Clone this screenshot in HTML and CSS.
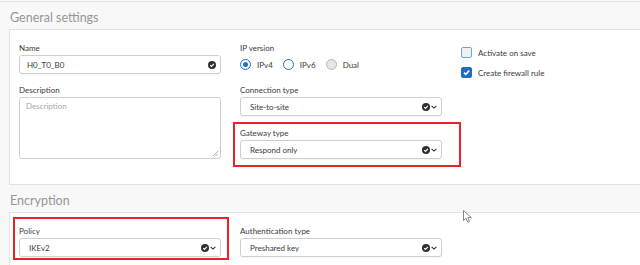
FILE: index.html
```html
<!DOCTYPE html>
<html>
<head>
<meta charset="utf-8">
<link rel="stylesheet" href="styles.css">
</head>
<body>
<div class="page">
  <h2 class="section-title">General settings</h2>
  <div class="panel">
    <div class="col">
      <div class="field">
        <div class="label">Name</div>
        <div class="control">
          <span class="value">H0_T0_B0</span>
          <svg class="ok" width="8" height="8" viewBox="0 0 8 8"><circle cx="4" cy="4" r="4" fill="#2f2f2f"/><path d="M2.2 4.1 L3.5 5.3 L5.9 2.8" fill="none" stroke="#fff" stroke-width="1.2"/></svg>
        </div>
      </div>
      <div class="field">
        <div class="label">Description</div>
        <div class="textarea">
          <span class="placeholder">Description</span>
          <svg class="grip" width="6" height="6" viewBox="0 0 6 6"><path d="M6 1 L1 6 M6 3.5 L3.5 6" stroke="#999" stroke-width="0.8"/></svg>
        </div>
      </div>
    </div>
    <div class="col">
      <div class="field">
        <div class="label">IP version</div>
        <div class="radios">
          <span class="radio-item"><span class="radio checked"></span>IPv4</span>
          <span class="radio-item"><span class="radio"></span>IPv6</span>
          <span class="radio-item"><span class="radio disabled"></span>Dual</span>
        </div>
      </div>
      <div class="field">
        <div class="label">Connection type</div>
        <div class="control">
          <span class="value sel">Site-to-site</span>
          <svg class="ok" width="8" height="8" viewBox="0 0 8 8"><circle cx="4" cy="4" r="4" fill="#2f2f2f"/><path d="M2.2 4.1 L3.5 5.3 L5.9 2.8" fill="none" stroke="#fff" stroke-width="1.2"/></svg>
          <svg class="chev" width="6" height="4" viewBox="0 0 6 4"><path d="M0.6 0.8 L3 3.1 L5.4 0.8" fill="none" stroke="#333" stroke-width="1.1"/></svg>
        </div>
      </div>
      <div class="field gateway highlight">
        <div class="label">Gateway type</div>
        <div class="control">
          <span class="value sel">Respond only</span>
          <svg class="ok" width="8" height="8" viewBox="0 0 8 8"><circle cx="4" cy="4" r="4" fill="#2f2f2f"/><path d="M2.2 4.1 L3.5 5.3 L5.9 2.8" fill="none" stroke="#fff" stroke-width="1.2"/></svg>
          <svg class="chev" width="6" height="4" viewBox="0 0 6 4"><path d="M0.6 0.8 L3 3.1 L5.4 0.8" fill="none" stroke="#333" stroke-width="1.1"/></svg>
        </div>
      </div>
    </div>
    <div class="col checks">
      <div class="check-item"><span class="checkbox"></span>Activate on save</div>
      <div class="check-item"><span class="checkbox checked"><svg width="9" height="9" viewBox="0 0 9 9"><path d="M2 4.6 L3.8 6.4 L7.2 2.6" fill="none" stroke="#fff" stroke-width="1.6"/></svg></span>Create firewall rule</div>
    </div>
  </div>

  <h2 class="section-title">Encryption</h2>
  <div class="panel panel-last">
    <div class="col">
      <div class="field policy highlight">
        <div class="label">Policy</div>
        <div class="control">
          <span class="value sel">IKEv2</span>
          <svg class="ok" width="8" height="8" viewBox="0 0 8 8"><circle cx="4" cy="4" r="4" fill="#2f2f2f"/><path d="M2.2 4.1 L3.5 5.3 L5.9 2.8" fill="none" stroke="#fff" stroke-width="1.2"/></svg>
          <svg class="chev" width="6" height="4" viewBox="0 0 6 4"><path d="M0.6 0.8 L3 3.1 L5.4 0.8" fill="none" stroke="#333" stroke-width="1.1"/></svg>
        </div>
      </div>
    </div>
    <div class="col">
      <div class="field">
        <div class="label">Authentication type</div>
        <div class="control">
          <span class="value sel">Preshared key</span>
          <svg class="ok" width="8" height="8" viewBox="0 0 8 8"><circle cx="4" cy="4" r="4" fill="#2f2f2f"/><path d="M2.2 4.1 L3.5 5.3 L5.9 2.8" fill="none" stroke="#fff" stroke-width="1.2"/></svg>
          <svg class="chev" width="6" height="4" viewBox="0 0 6 4"><path d="M0.6 0.8 L3 3.1 L5.4 0.8" fill="none" stroke="#333" stroke-width="1.1"/></svg>
        </div>
      </div>
    </div>
  </div>
</div>
<svg class="cursor" width="10" height="14" viewBox="0 0 10 14"><path d="M0.5 0.5 L0.5 10.5 L3 8.2 L4.8 12.3 L6.6 11.5 L4.9 7.6 L8.3 7.6 Z" fill="#fff" stroke="#777" stroke-width="0.9"/></svg>
</body>
</html>
```

FILE: styles.css
```css
html, body {
  margin: 0;
  padding: 0;
}
body {
  width: 640px;
  height: 265px;
  overflow: hidden;
  background: #f8f8f8;
  font-family: Lato, "Open Sans", sans-serif;
  color: #3a3a3a;
  position: relative;
}
.page {
  margin-top: 1px;
  border-top: 1px solid #e4e4e4;
}
.section-title {
  margin: 0;
  height: 27px;
  box-sizing: border-box;
  padding: 2px 0 0 10px;
  line-height: 27px;
  font-size: 12.5px;
  font-weight: 400;
  color: #969696;
}
.panel {
  margin-left: 9px;
  background: #fff;
  border: 1px solid #e2e2e2;
  border-right: none;
  padding: 12px 9px 25px;
  display: flex;
  gap: 19px;
}
.panel-last {
  padding-bottom: 12px;
}
.col {
  width: 202px;
  display: flex;
  flex-direction: column;
  gap: 10px;
}
.col.checks {
  width: auto;
  padding-top: 5px;
  gap: 9px;
}
.field {
  display: flex;
  flex-direction: column;
  position: relative;
}
.gateway {
  margin-top: 1px;
}
.label {
  font-size: 8px;
  line-height: 12px;
  margin-bottom: 1px;
  color: #3a3a3a;
}
.control {
  height: 19px;
  box-sizing: border-box;
  border: 1px solid #cfcfcf;
  border-radius: 3px;
  background: #fff;
  display: flex;
  align-items: center;
  padding: 0 4px 0 7px;
  box-shadow: 0 1px 1px rgba(0,0,0,0.04);
}
.value {
  flex: 1;
  font-size: 8px;
  color: #3a3a3a;
}
.value.sel {
  padding-left: 2px;
}
.ok {
  display: block;
}
.chev {
  display: block;
  margin-left: 1px;
}
.textarea {
  height: 62px;
  box-sizing: border-box;
  border: 1px solid #cfcfcf;
  border-radius: 3px;
  background: #fff;
  padding: 3px 6px;
  display: flex;
  flex-direction: column;
  justify-content: space-between;
  align-items: flex-start;
}
.placeholder {
  font-size: 8px;
  color: #a8a8a8;
}
.grip {
  align-self: flex-end;
  margin-right: -4px;
  margin-bottom: -1px;
}
.radios {
  height: 19px;
  display: flex;
  align-items: center;
  gap: 10px;
}
.radio-item {
  display: flex;
  align-items: center;
  gap: 6px;
  font-size: 8px;
  color: #3a3a3a;
}
.radio {
  width: 11px;
  height: 11px;
  box-sizing: border-box;
  border-radius: 50%;
  border: 1.5px solid #1f74c6;
  background: #fff;
  display: flex;
  align-items: center;
  justify-content: center;
}
.radio.checked::after {
  content: "";
  width: 5px;
  height: 5px;
  border-radius: 50%;
  background: #1f74c6;
}
.radio.disabled {
  border-color: #b9b9b9;
  background: #e6e6e6;
}
.check-item {
  display: flex;
  align-items: center;
  gap: 6px;
  font-size: 8px;
  color: #3a3a3a;
  height: 11px;
}
.checkbox {
  width: 11px;
  height: 11px;
  box-sizing: border-box;
  border: 1.5px solid #6aa6de;
  border-radius: 2px;
  background: #f1f1f1;
  display: flex;
  align-items: center;
  justify-content: center;
}
.checkbox.checked {
  background: #1d6ec2;
  border-color: #1d6ec2;
}
.checkbox svg {
  display: block;
}
.highlight::after {
  content: "";
  position: absolute;
  border: 2px solid #e5232b;
  pointer-events: none;
}
.gateway.highlight::after {
  top: -5px;
  left: -7px;
  right: -19px;
  bottom: -8px;
}
.policy.highlight::after {
  top: -8px;
  left: -6px;
  right: -8px;
  bottom: -3px;
}
.cursor {
  position: absolute;
  left: 463px;
  top: 210px;
}
```
